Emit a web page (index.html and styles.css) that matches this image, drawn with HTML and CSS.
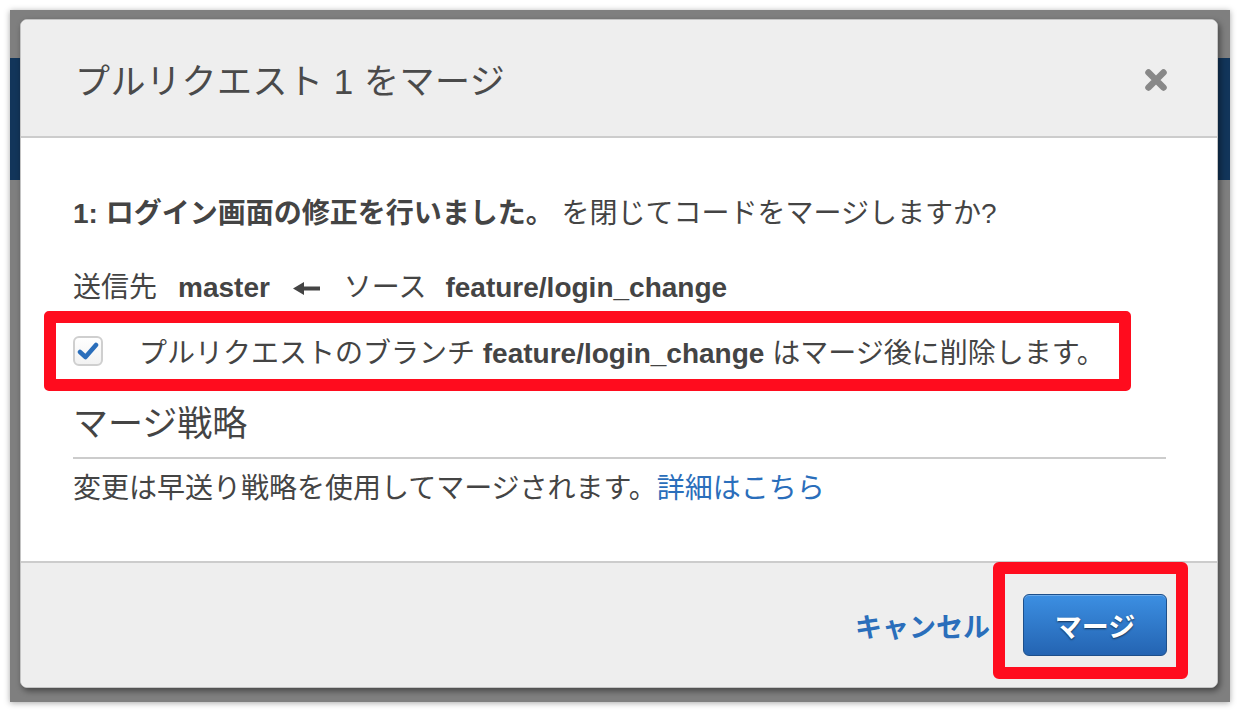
FILE: index.html
```html
<!DOCTYPE html>
<html lang="ja">
<head>
  <meta charset="UTF-8">
  <title>プルリクエスト 1 をマージ</title>
  <link rel="stylesheet" href="styles.css">
</head>
<body>
  <div class="screen">
    <div class="modal">
      <div class="modal-header">
        <h2 class="title">プルリクエスト 1 をマージ</h2>
        <button class="close" aria-label="閉じる">
          <svg width="22" height="22" viewBox="0 0 22 22"><path d="M3.5 3.5 L18.5 18.5 M18.5 3.5 L3.5 18.5" stroke="#888" stroke-width="6.5" stroke-linecap="round"/></svg>
        </button>
      </div>
      <div class="modal-body">
        <p class="line first"><b>1: ログイン画面の修正を行いました。</b> を閉じてコードをマージしますか?</p>
        <p class="line branches">
          <span class="to">送信先</span>
          <b>master</b>
          <svg class="arrow" width="27" height="15" viewBox="0 0 27 15"><path d="M0 7.5 L11 1 L11 5.5 L27 5.5 L27 9.5 L11 9.5 L11 14 Z" fill="#444"/></svg>
          <span class="from">ソース</span>
          <b>feature/login_change</b>
        </p>
        <label class="check-row">
          <span class="checkbox">
            <svg width="22" height="20" viewBox="0 0 22 20"><path d="M3 11 L8.5 16 L19 4" fill="none" stroke="#2a6ebb" stroke-width="4.5" stroke-linecap="round" stroke-linejoin="round"/></svg>
          </span>
          <span>プルリクエストのブランチ <b>feature/login_change</b> はマージ後に削除します。</span>
        </label>
        <h3 class="section">マージ戦略</h3>
        <p class="line desc">変更は早送り戦略を使用してマージされます。<a href="#">詳細はこちら</a></p>
      </div>
      <div class="modal-footer">
        <a href="#" class="cancel">キャンセル</a>
        <button class="merge">マージ</button>
        <span class="annotation"></span>
      </div>
    </div>
  </div>
</body>
</html>
```

FILE: styles.css
```css
:root {
  --text: #444;
  --link: #2a6ebb;
  --line: #cccccc;
  --panel: #eeeeee;
  --red: #ff0c1e;
}
body {
  margin: 0;
  background: #fff;
  font-family: 'Liberation Sans', 'Noto Sans CJK JP', sans-serif;
  color: var(--text);
}
.screen {
  box-sizing: border-box;
  width: 1220px;
  height: 692px;
  margin: 10px;
  padding: 9px 12px 14px 10px;
  display: flex;
  background: linear-gradient(to bottom, #7f7f7f 48px, #12355a 48px, #12355a 170px, #7f7f7f 170px);
  box-shadow: 0 1px 6px rgba(0, 0, 0, 0.35);
}
.modal {
  flex: 1;
  display: flex;
  flex-direction: column;
  background: #fff;
  border: 1px solid #c4c4c4;
  border-radius: 7px;
  box-shadow: 2px 3px 6px rgba(0, 0, 0, 0.45);
  overflow: hidden;
}
.modal-header {
  height: 116px;
  display: flex;
  align-items: center;
  justify-content: space-between;
  padding: 0 50px 0 54px;
  background: var(--panel);
  border-bottom: 2px solid var(--line);
}
.title {
  margin: 0;
  font-size: 35px;
  font-weight: normal;
  color: #4a4a4a;
  letter-spacing: 0.5px;
}
.close {
  background: none;
  border: none;
  padding: 0;
  width: 22px;
  height: 22px;
  margin-top: 4px;
  cursor: pointer;
}
.modal-body {
  flex: 1;
  padding: 57px 51px 0 52px;
}
.line {
  margin: 0;
  font-size: 28px;
  line-height: 38px;
}
.line b { font-weight: bold; }
.branches {
  margin-top: 36px;
  display: flex;
  align-items: center;
}
.branches .to { margin-right: 21px; }
.branches b { margin-right: 23px; }
.branches .arrow { margin-right: 24px; }
.branches .from { margin-right: 19px; }
.check-row {
  box-sizing: border-box;
  display: flex;
  align-items: center;
  width: 1087px;
  height: 80px;
  margin: 4px 0 0 -29px;
  padding-left: 17px;
  border: 12px solid var(--red);
  border-radius: 5px;
  font-size: 28px;
  white-space: nowrap;
}
.checkbox {
  box-sizing: border-box;
  flex: none;
  width: 30px;
  height: 30px;
  margin-right: 36px;
  border: 2px solid #cfcfcf;
  border-radius: 6px;
  background: linear-gradient(#fff, #f2f2f2);
  display: flex;
  align-items: center;
  justify-content: center;
}
.section {
  margin: 12px 0 0;
  padding-bottom: 13px;
  font-size: 35px;
  line-height: 41px;
  font-weight: normal;
  border-bottom: 2px solid var(--line);
}
.desc { margin-top: 11px; }
.desc a {
  color: var(--link);
  text-decoration: none;
}
.modal-footer {
  position: relative;
  height: 124px;
  display: flex;
  align-items: center;
  justify-content: flex-end;
  padding-right: 50px;
  background: var(--panel);
  border-top: 2px solid var(--line);
}
.cancel {
  color: var(--link);
  font-size: 27px;
  font-weight: bold;
  text-decoration: none;
  margin-right: 33px;
}
.merge {
  width: 144px;
  height: 62px;
  border: 1px solid #1d4f8a;
  border-radius: 6px;
  background: linear-gradient(#3c8fe2, #2464b2);
  color: #fff;
  font-family: inherit;
  font-size: 27px;
  font-weight: bold;
  text-shadow: 0 1px 2px rgba(0, 0, 0, 0.6);
  box-shadow: inset 0 1px 0 rgba(255, 255, 255, 0.25);
}
/* red highlight drawn over the screenshot */
.annotation {
  position: absolute;
  top: -1px;
  right: 29px;
  width: 195px;
  height: 117px;
  box-sizing: border-box;
  border: 12px solid var(--red);
  border-radius: 6px;
}
```
